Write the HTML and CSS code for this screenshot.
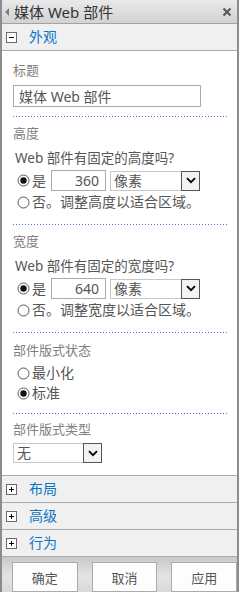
FILE: index.html
```html
<!DOCTYPE html>
<html lang="zh-CN">
<head>
  <meta charset="UTF-8" />
  <meta name="viewport" content="width=device-width, initial-scale=1.0"/>
  <title>媒体 Web 部件</title>
  <link rel="stylesheet" href="styles.css">
</head>
<body>
  <div class="panel">
    <div class="panel-head">
      <span class="back-arrow"></span>
      <span class="panel-title">媒体 Web 部件</span>
      <svg class="close" width="10" height="10" viewBox="0 0 10 10">
        <path d="M1.5 1.5L8.5 8.5M8.5 1.5L1.5 8.5" stroke="#5a5a5a" stroke-width="2.2"/>
      </svg>
    </div>

    <div class="section-head">
      <svg class="toggle" width="11" height="11" viewBox="0 0 11 11">
        <rect x="0.5" y="0.5" width="10" height="10" fill="#fff" stroke="#6b6b6b"/>
        <path d="M3 5.5h5" stroke="#000"/>
      </svg>
      <span class="section-name">外观</span>
    </div>

    <div class="section-body">
      <div class="group g-title">
        <div class="label">标题</div>
        <input type="text" class="text-input" value="媒体 Web 部件">
      </div>

      <div class="group g-size">
        <div class="label">高度</div>
        <div class="question">Web 部件有固定的高度吗?</div>
        <div class="radio-row fixed">
          <svg class="radio" width="13" height="13" viewBox="0 0 13 13"><circle cx="6.5" cy="6.5" r="5.5" fill="#fff" stroke="#555"/><circle cx="6.5" cy="6.5" r="3.2" fill="#111"/></svg>
          <span class="opt">是</span>
          <input type="text" class="num-input" value="360">
          <div class="select unit">
            <span class="select-text">像素</span>
            <span class="select-arrow"><svg width="10" height="7" viewBox="0 0 10 7"><path d="M1 1.2l4 4 4-4" fill="none" stroke="#000" stroke-width="1.8"/></svg></span>
          </div>
        </div>
        <div class="radio-row">
          <svg class="radio" width="13" height="13" viewBox="0 0 13 13"><circle cx="6.5" cy="6.5" r="5.5" fill="#fff" stroke="#555"/></svg>
          <span class="opt">否。调整高度以适合区域。</span>
        </div>
      </div>

      <div class="group g-size">
        <div class="label">宽度</div>
        <div class="question">Web 部件有固定的宽度吗?</div>
        <div class="radio-row fixed">
          <svg class="radio" width="13" height="13" viewBox="0 0 13 13"><circle cx="6.5" cy="6.5" r="5.5" fill="#fff" stroke="#555"/><circle cx="6.5" cy="6.5" r="3.2" fill="#111"/></svg>
          <span class="opt">是</span>
          <input type="text" class="num-input" value="640">
          <div class="select unit">
            <span class="select-text">像素</span>
            <span class="select-arrow"><svg width="10" height="7" viewBox="0 0 10 7"><path d="M1 1.2l4 4 4-4" fill="none" stroke="#000" stroke-width="1.8"/></svg></span>
          </div>
        </div>
        <div class="radio-row">
          <svg class="radio" width="13" height="13" viewBox="0 0 13 13"><circle cx="6.5" cy="6.5" r="5.5" fill="#fff" stroke="#555"/></svg>
          <span class="opt">否。调整宽度以适合区域。</span>
        </div>
      </div>

      <div class="group g-state">
        <div class="label">部件版式状态</div>
        <div class="radio-row first">
          <svg class="radio" width="13" height="13" viewBox="0 0 13 13"><circle cx="6.5" cy="6.5" r="5.5" fill="#fff" stroke="#555"/></svg>
          <span class="opt">最小化</span>
        </div>
        <div class="radio-row">
          <svg class="radio" width="13" height="13" viewBox="0 0 13 13"><circle cx="6.5" cy="6.5" r="5.5" fill="#fff" stroke="#555"/><circle cx="6.5" cy="6.5" r="3.2" fill="#111"/></svg>
          <span class="opt">标准</span>
        </div>
      </div>

      <div class="group g-type">
        <div class="label">部件版式类型</div>
        <div class="select chrome">
          <span class="select-text">无</span>
          <span class="select-arrow"><svg width="10" height="7" viewBox="0 0 10 7"><path d="M1 1.2l4 4 4-4" fill="none" stroke="#000" stroke-width="1.8"/></svg></span>
        </div>
      </div>
    </div>

    <div class="section-head closed">
      <svg class="toggle" width="11" height="11" viewBox="0 0 11 11">
        <rect x="0.5" y="0.5" width="10" height="10" fill="#fff" stroke="#6b6b6b"/>
        <path d="M3 5.5h5M5.5 3v5" stroke="#000"/>
      </svg>
      <span class="section-name">布局</span>
    </div>
    <div class="section-head closed">
      <svg class="toggle" width="11" height="11" viewBox="0 0 11 11">
        <rect x="0.5" y="0.5" width="10" height="10" fill="#fff" stroke="#6b6b6b"/>
        <path d="M3 5.5h5M5.5 3v5" stroke="#000"/>
      </svg>
      <span class="section-name">高级</span>
    </div>
    <div class="section-head closed">
      <svg class="toggle" width="11" height="11" viewBox="0 0 11 11">
        <rect x="0.5" y="0.5" width="10" height="10" fill="#fff" stroke="#6b6b6b"/>
        <path d="M3 5.5h5M5.5 3v5" stroke="#000"/>
      </svg>
      <span class="section-name">行为</span>
    </div>

    <div class="footer">
      <button class="btn">确定</button>
      <button class="btn">取消</button>
      <button class="btn">应用</button>
    </div>
  </div>
</body>
</html>
```

FILE: styles.css
```css
* {
  box-sizing: border-box;
}

body {
  margin: 0;
  font-family: 'Noto Sans', 'Noto Sans CJK SC', sans-serif;
  font-size: 13px;
  color: #555;
  background: #fff;
}

.panel {
  width: 239px;
  height: 592px;
  border-left: 2px solid #8c8c8c;
  border-right: 2px solid #8c8c8c;
  display: flex;
  flex-direction: column;
  overflow: hidden;
}

.panel-head {
  height: 24px;
  display: flex;
  align-items: center;
  padding-left: 3px;
  background: linear-gradient(#e9e9e9, #d2d2d2);
  border-bottom: 1px solid #a3a3a3;
}

.back-arrow {
  width: 0;
  height: 0;
  border-top: 4px solid transparent;
  border-bottom: 4px solid transparent;
  border-right: 4px solid #7d7d7d;
}

.panel-title {
  margin-left: 5px;
  font-size: 15px;
  line-height: 20px;
  color: #333;
}

.close {
  margin-left: auto;
  margin-right: 5px;
}

.section-head {
  height: 27px;
  display: flex;
  align-items: center;
  padding-left: 4px;
  background: #f0f0f0;
  border-bottom: 1px solid #ababab;
}

.section-name {
  margin-left: 12px;
  font-size: 14px;
  line-height: 20px;
  color: #0a74c8;
}

.section-body {
  padding: 0 9px 0 11px;
  border-bottom: 1px solid #ababab;
}

.group {
  border-bottom: 1px solid transparent;
  background: repeating-linear-gradient(to right, #4a78d2 0 1px, transparent 1px 3px) bottom / 100% 1px no-repeat;
}

.g-title {
  padding: 9px 0 10px;
}

.g-size {
  padding: 5px 0 13px;
}

.g-state {
  padding: 6px 0 11px;
}

.g-type {
  padding: 4px 0 11px;
  background: none;
}

.label {
  line-height: 20px;
  color: #808080;
}

.text-input {
  display: block;
  margin-top: 5px;
  width: 188px;
  height: 22px;
  padding: 0 5px;
  border: 1px solid #ababab;
  font-family: inherit;
  font-size: 14px;
  color: #555;
  outline: none;
}

.question {
  margin-top: 5px;
  padding-left: 2px;
  font-size: 13.5px;
  line-height: 20px;
}

.radio-row {
  display: flex;
  align-items: center;
  height: 20px;
  margin-top: 1px;
  padding-left: 4px;
}

.radio-row.fixed {
  height: 21px;
  margin-top: 2px;
}

.radio-row.first {
  margin-top: 3px;
}

.g-state .radio-row + .radio-row {
  margin-top: 0;
}

.opt {
  margin-left: 2px;
  font-size: 14px;
  line-height: 20px;
}

.num-input {
  margin-left: 5px;
  width: 55px;
  height: 21px;
  padding: 0 6px 0 0;
  border: 1px solid #ababab;
  text-align: right;
  font-family: inherit;
  font-size: 14px;
  color: #555;
  outline: none;
}

.select {
  display: flex;
  height: 20px;
}

.select.unit {
  margin-left: 4px;
  width: 90px;
}

.select.chrome {
  margin-top: 4px;
  width: 89px;
}

.select-text {
  flex: 1;
  padding-left: 3px;
  border: 1px solid #c8c8c8;
  border-right: 0;
  font-size: 14px;
  line-height: 18px;
}

.select-arrow {
  width: 19px;
  border: 1px solid #555;
  background: #f3f3f3;
  display: flex;
  align-items: center;
  justify-content: center;
}

.footer {
  flex: 1;
  display: flex;
  gap: 14px;
  padding: 5px 0 0 10px;
  background: linear-gradient(#c9c9c9, #e3e3e3 55%, #d9d9d9);
}

.btn {
  width: 66px;
  height: 30px;
  border: 1px solid #ababab;
  background: #fdfdfd;
  font-family: inherit;
  font-size: 13px;
  color: #555;
  padding: 0;
}
```
